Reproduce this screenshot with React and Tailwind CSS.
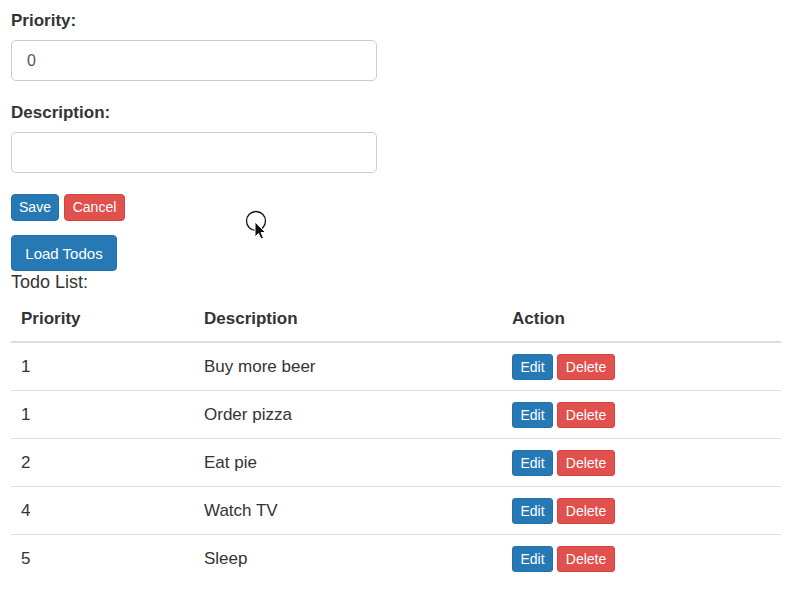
import React from 'react';

const todos = [
  { priority: 1, description: 'Buy more beer' },
  { priority: 1, description: 'Order pizza' },
  { priority: 2, description: 'Eat pie' },
  { priority: 4, description: 'Watch TV' },
  { priority: 5, description: 'Sleep' },
];

function Cursor() {
  return (
    <svg className="absolute left-[244px] top-[209px]" width="30" height="34" viewBox="0 0 30 34">
      <circle cx="12" cy="12" r="9.5" fill="none" stroke="#111" strokeWidth="1.3" />
      <path d="M11 13 L11 28 L14.5 24.5 L17 30 L19.5 29 L17 23.5 L21.5 23.5 Z" fill="#111" stroke="#fff" strokeWidth="1" />
    </svg>
  );
}

export default function App() {
  return (
    <div className="relative bg-white min-h-[591px] px-[11px] pt-[9px] text-[#333] text-[17px] leading-[23px]" style={{ fontFamily: '"Liberation Sans", Arial, sans-serif' }}>
      <div className="mb-[20px]">
        <label className="block font-bold mb-[8px]">Priority:</label>
        <input
          defaultValue="0"
          className="block w-[366px] h-[41px] px-[15px] border border-[#ccc] rounded-[5px] text-[16px] text-[#555] outline-none"
        />
      </div>
      <div className="mb-[21px]">
        <label className="block font-bold mb-[8px]">Description:</label>
        <input className="block w-[366px] h-[41px] px-[15px] border border-[#ccc] rounded-[5px] text-[16px] outline-none" />
      </div>

      <div className="flex gap-[5px] mb-[14px]">
        <button className="h-[27px] w-[48px] rounded-[4px] bg-[#2679b5] border border-[#2470a8] text-white text-[14px]">Save</button>
        <button className="h-[27px] w-[61px] rounded-[4px] bg-[#e0504c] border border-[#d4433f] text-white text-[14px]">Cancel</button>
      </div>

      <button className="block h-[36px] w-[106px] rounded-[4px] bg-[#2679b5] border border-[#2470a8] text-white text-[15px]">Load Todos</button>
      <div className="text-[18px]">Todo List:</div>

      <table className="w-[770px] border-collapse mt-[2px]">
        <thead>
          <tr className="h-[46px] border-b-2 border-[#ddd]">
            <th className="w-[183px] text-left font-bold pl-[10px]">Priority</th>
            <th className="w-[308px] text-left font-bold pl-[10px]">Description</th>
            <th className="text-left font-bold pl-[10px]">Action</th>
          </tr>
        </thead>
        <tbody>
          {todos.map((t, i) => (
            <tr key={i} className={`h-[48px] ${i < todos.length - 1 ? 'border-b border-[#ddd]' : ''}`}>
              <td className="pl-[10px] align-middle">{t.priority}</td>
              <td className="pl-[10px] align-middle">{t.description}</td>
              <td className="pl-[10px] align-middle">
                <div className="flex gap-[4px] pt-[2px]">
                  <button className="h-[26px] w-[41px] rounded-[3px] bg-[#2679b5] border border-[#2470a8] text-white text-[14px]">Edit</button>
                  <button className="h-[26px] w-[58px] rounded-[3px] bg-[#e0504c] border border-[#d4433f] text-white text-[14px]">Delete</button>
                </div>
              </td>
            </tr>
          ))}
        </tbody>
      </table>

      <Cursor />
    </div>
  );
}
